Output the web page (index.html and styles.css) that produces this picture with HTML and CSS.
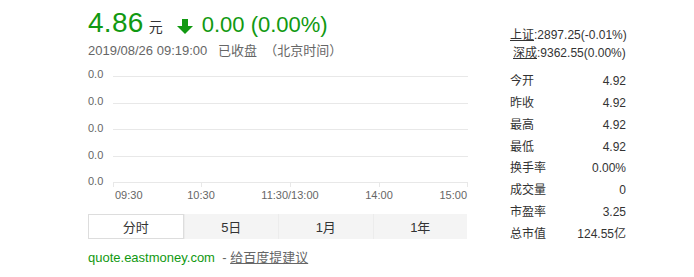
FILE: index.html
```html
<!DOCTYPE html>
<html lang="zh-CN">

<head>
    <meta charset="UTF-8">
    <title>4.86 元 行情</title>
    <link rel="stylesheet" href="styles.css">
</head>

<body>
    <div class="quote">
        <div class="main">
            <div class="price-row">
                <span class="price">4.86</span>
                <span class="unit">元</span>
                <svg class="arrow" width="16" height="16" viewBox="0 0 16 16">
                    <path d="M5 0 H11 V7 H16 L8 15 L0 7 H5 Z" fill="#119911" />
                </svg>
                <span class="change">0.00 (0.00%)</span>
            </div>
            <div class="time-row">2019/08/26 09:19:00&nbsp;&nbsp;&nbsp;已收盘&nbsp;&nbsp;（北京时间）</div>

            <!-- intraday chart, flat because market closed -->
            <svg class="chart" width="400" height="144" viewBox="0 0 400 144">
                <g stroke="#e8e8e8" stroke-width="1">
                    <line x1="33" y1="12.5" x2="388" y2="12.5" />
                    <line x1="33" y1="39.5" x2="388" y2="39.5" />
                    <line x1="33" y1="65.5" x2="388" y2="65.5" />
                    <line x1="33" y1="92.5" x2="388" y2="92.5" />
                    <line x1="33" y1="118.5" x2="388" y2="118.5" />
                    <line x1="33.5" y1="118" x2="33.5" y2="123" />
                    <line x1="121.5" y1="118" x2="121.5" y2="123" />
                    <line x1="210.5" y1="118" x2="210.5" y2="123" />
                    <line x1="299.5" y1="118" x2="299.5" y2="123" />
                    <line x1="387.5" y1="118" x2="387.5" y2="123" />
                </g>
                <g class="axis">
                    <text x="8" y="14">0.0</text>
                    <text x="8" y="41">0.0</text>
                    <text x="8" y="68">0.0</text>
                    <text x="8" y="95">0.0</text>
                    <text x="8" y="121">0.0</text>
                    <text x="35" y="135">09:30</text>
                    <text x="121" y="135" text-anchor="middle">10:30</text>
                    <text x="210" y="135" text-anchor="middle">11:30/13:00</text>
                    <text x="299" y="135" text-anchor="middle">14:00</text>
                    <text x="387" y="135" text-anchor="end">15:00</text>
                </g>
            </svg>

            <div class="tabs">
                <div class="tab active">分时</div>
                <div class="tab">5日</div>
                <div class="tab">1月</div>
                <div class="tab">1年</div>
            </div>

            <div class="source">
                <span class="site">quote.eastmoney.com</span>&nbsp; - <a href="#" class="advice">给百度提建议</a>
            </div>
        </div>

        <div class="side">
            <div class="index"><a href="#">上证</a>:2897.25(-0.01%)</div>
            <div class="index shift"><a href="#">深成</a>:9362.55(0.00%)</div>
            <ul class="stats">
                <li><span>今开</span><span>4.92</span></li>
                <li><span>昨收</span><span>4.92</span></li>
                <li><span>最高</span><span>4.92</span></li>
                <li><span>最低</span><span>4.92</span></li>
                <li><span>换手率</span><span>0.00%</span></li>
                <li><span>成交量</span><span>0</span></li>
                <li><span>市盈率</span><span>3.25</span></li>
                <li><span>总市值</span><span>124.55亿</span></li>
            </ul>
        </div>
    </div>
</body>

</html>
```

FILE: styles.css
```css
*,
*::before,
*::after {
    box-sizing: border-box;
}

body {
    margin: 0;
    background: #ffffff;
    font-family: Arial, "Liberation Sans", "Noto Sans CJK SC", sans-serif;
    color: #333333;
}

a {
    color: inherit;
}

.quote {
    display: flex;
    padding-left: 88px;
}

.main {
    width: 380px;
}

.price-row {
    display: flex;
    align-items: baseline;
    height: 41px;
    padding-top: 7px;
    color: #119911;
}

.price {
    font-size: 28px;
    letter-spacing: 0.3px;
}

.unit {
    font-size: 14px;
    color: #333333;
    margin-left: 5px;
}

.arrow {
    margin-left: 14px;
    align-self: center;
    margin-top: 6px;
}

.change {
    font-size: 22px;
    margin-left: 9px;
}

.time-row {
    font-size: 13px;
    color: #666666;
    height: 23px;
    padding-top: 2px;
    line-height: 16px;
}

.chart {
    display: block;
    margin-left: -8px;
}

.axis text {
    font-family: Arial, "Liberation Sans", sans-serif;
    font-size: 11px;
    fill: #666666;
}

.tabs {
    display: flex;
    margin-top: 6px;
    width: 379px;
    height: 25px;
    background: #f4f4f4;
}

.tab {
    flex: 1;
    display: flex;
    align-items: center;
    justify-content: center;
    font-size: 13px;
    color: #333333;
    border-left: 1px solid #ececec;
}

.tab:first-child {
    border-left: none;
}

.tab.active {
    background: #ffffff;
    border: 1px solid #dddddd;
}

.source {
    margin-top: 8px;
    font-size: 13px;
    color: #666666;
}

.site {
    color: #119911;
}

.advice {
    color: #666666;
    text-decoration: underline;
}

.side {
    margin-left: 42px;
    width: 116px;
    padding-top: 27px;
    font-size: 12px;
}

.index {
    height: 18px;
    line-height: 16px;
    white-space: nowrap;
    color: #333333;
}

.index a {
    text-decoration: underline;
}

.index.shift {
    padding-left: 3px;
}

.stats {
    list-style: none;
    margin: 8px 0 0;
    padding: 0;
}

.stats li {
    display: flex;
    justify-content: space-between;
    height: 21.85px;
    line-height: 21.85px;
}
```
